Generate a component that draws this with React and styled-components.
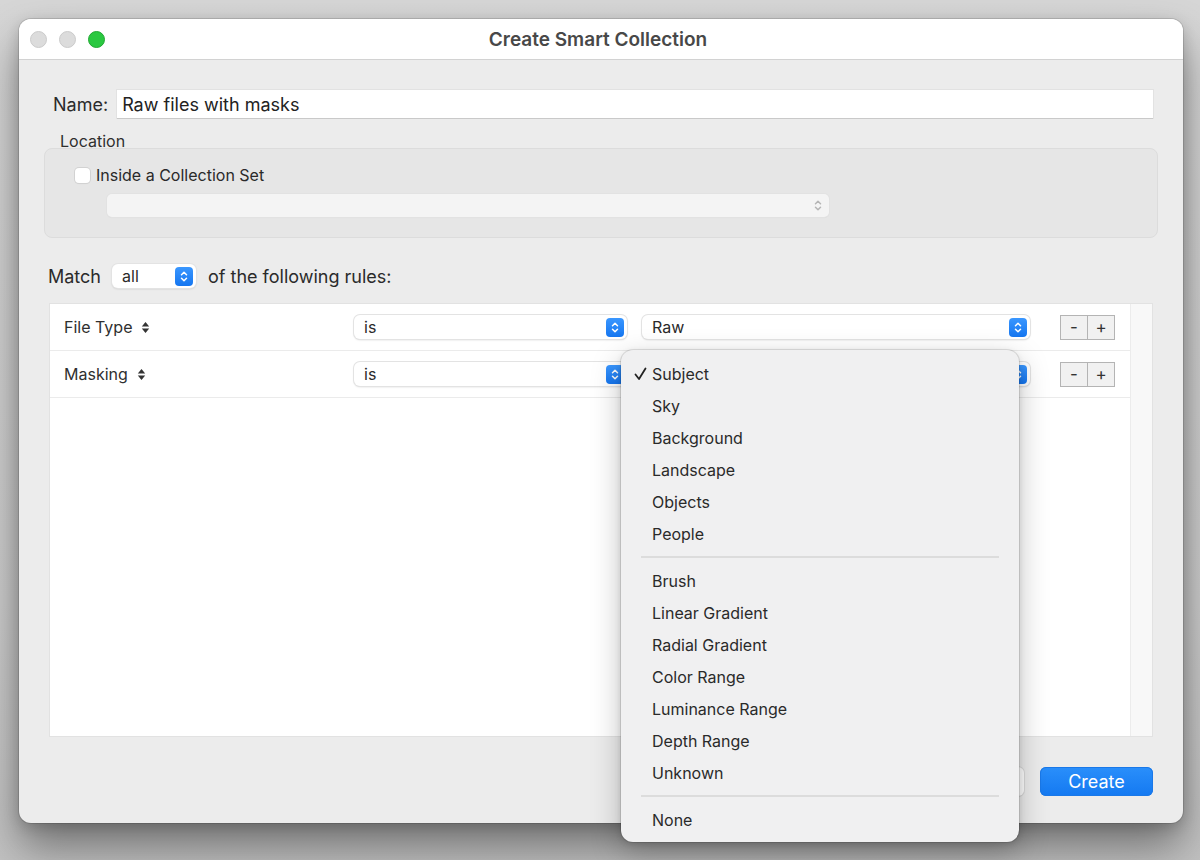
import React from "react";
import styled, { createGlobalStyle } from "styled-components";

const Global = createGlobalStyle`
  html, body {
    margin: 0;
    padding: 0;
  }
  body {
    width: 1200px;
    height: 860px;
    overflow: hidden;
    background: linear-gradient(180deg, #d6d6d6 0%, #cdcdcd 70%, #c2c2c2 100%);
    font-family: Inter, "Noto Sans", "Liberation Sans", sans-serif;
    color: #2b2b2b;
  }
`;

const Page = styled.div`
  padding: 19px 17px 0 19px;
`;

const Window = styled.div`
  position: relative;
  width: 1164px;
  height: 804px;
  border-radius: 12px;
  background: #ececec;
  box-shadow: 0 0 0 1px rgba(0, 0, 0, 0.12), 0 24px 44px rgba(0, 0, 0, 0.42),
    0 4px 14px rgba(0, 0, 0, 0.16);
  display: flex;
  flex-direction: column;
`;

const TitleBar = styled.div`
  height: 40px;
  flex: none;
  border-bottom: 1px solid #d2d2d2;
  background: #ffffff;
  border-radius: 12px 12px 0 0;
  display: flex;
  align-items: center;
  padding-left: 11px;
`;

const Lights = styled.div`
  display: flex;
  gap: 12px;
`;

const Light = styled.span`
  width: 15px;
  height: 15px;
  border-radius: 50%;
  background: ${(p) => p.$color || "#dcdcdc"};
  border: 1px solid ${(p) => (p.$color ? "#21a833" : "#cbcbcb")};
`;

const Title = styled.div`
  flex: 1;
  text-align: center;
  margin-left: -92px;
  font-size: 19px;
  font-weight: 600;
  color: #484848;
`;

const Body = styled.div`
  flex: 1;
  padding: 30px 25px 0 25px;
  display: flex;
  flex-direction: column;
`;

const NameRow = styled.div`
  display: flex;
  align-items: center;
  padding: 0 5px 0 9px;
  height: 28px;
`;

const Label = styled.span`
  font-size: 18px;
  color: #2a2a2a;
  white-space: nowrap;
  margin-left: ${(p) => p.$ml || 0}px;
`;

const TextInput = styled.div`
  flex: 1;
  height: 28px;
  margin-left: 9px;
  background: #fff;
  box-shadow: 0 1px 0 #c9c9c9, 0 0 0 1px #e2e2e2;
  display: flex;
  align-items: center;
  padding-left: 5px;
  font-size: 18px;
  color: #222;
`;

const LocationLabel = styled.div`
  font-size: 16px;
  color: #2f2f2f;
  padding-left: 16px;
  height: 17px;
  margin-top: 13px;
  line-height: 20px;
`;

const GroupBox = styled.div`
  height: 90px;
  box-sizing: border-box;
  background: #e6e6e6;
  border: 1px solid #dcdcdc;
  border-radius: 8px;
  padding: 17px 0 0 30px;
  display: flex;
  flex-direction: column;
`;

const CheckRow = styled.label`
  display: flex;
  align-items: center;
  gap: 6px;
  font-size: 16px;
  color: #2a2a2a;
  height: 18px;
`;

const Checkbox = styled.span`
  width: 15px;
  height: 15px;
  border-radius: 4px;
  background: #fff;
  box-shadow: 0 0 0 1px #d2d2d2, 0 1px 1px rgba(0, 0, 0, 0.08);
`;

const DisabledPopup = styled.div`
  margin: 10px 0 0 32px;
  width: 722px;
  height: 23px;
  background: #f4f4f4;
  border-radius: 5px;
  box-shadow: 0 0 0 1px #e2e2e2, 0 1px 1px rgba(0, 0, 0, 0.06);
  display: flex;
  align-items: center;
  justify-content: flex-end;
  padding-right: 7px;
  box-sizing: border-box;
`;

const MatchRow = styled.div`
  display: flex;
  align-items: center;
  margin-top: 26px;
  padding-left: 4px;
  height: 24px;
`;

const Popup = styled.div`
  width: ${(p) => p.$w}px;
  height: 24px;
  margin-left: ${(p) => p.$ml || 0}px;
  box-sizing: border-box;
  background: #fff;
  border-radius: 6px;
  box-shadow: 0 0 0 1px #e3e3e3, 0 1px 2px rgba(0, 0, 0, 0.18);
  display: flex;
  align-items: center;
  justify-content: space-between;
  padding: 0 3px 0 10px;
  font-size: 16px;
  color: #2a2a2a;
  flex: none;
`;

const BlueStep = styled.span`
  width: 18px;
  height: 19px;
  margin-left: auto;
  border-radius: 4px;
  background: linear-gradient(180deg, #3a97ff, #1576f0);
  display: flex;
  align-items: center;
  justify-content: center;
`;

const Table = styled.div`
  margin: 15px 5px 0 5px;
  height: 434px;
  box-sizing: border-box;
  background: #fff;
  border: 1px solid #e2e2e2;
  display: flex;
`;

const Rows = styled.div`
  flex: 1;
`;

const ScrollTrack = styled.div`
  width: 21px;
  background: #f8f8f8;
  border-left: 1px solid #ececec;
`;

const Row = styled.div`
  height: 46px;
  border-bottom: 1px solid #ebebeb;
  display: flex;
  align-items: center;
`;

const Field = styled.div`
  width: 290px;
  padding-left: 14px;
  display: flex;
  align-items: center;
  gap: 9px;
  font-size: 16px;
  color: #2f2f2f;
  flex: none;
`;

const PlusMinus = styled.div`
  display: flex;
  margin-left: 30px;
`;

const PMButton = styled.span`
  width: 28px;
  height: 25px;
  box-sizing: border-box;
  background: #f1f1f1;
  border: 1px solid #b4b4b4;
  margin-left: ${(p) => (p.$second ? "-1px" : "0")};
  display: flex;
  align-items: center;
  justify-content: center;
  font-size: 17px;
  color: #333;
`;

const Footer = styled.div`
  display: flex;
  justify-content: flex-end;
  gap: 16px;
  margin-top: 30px;
  padding-right: 5px;
`;

const Button = styled.span`
  width: ${(p) => p.$w}px;
  height: 29px;
  border-radius: 6px;
  display: flex;
  align-items: center;
  justify-content: center;
  font-size: 18px;
  color: ${(p) => (p.$primary ? "#fff" : "#222")};
  background: ${(p) =>
    p.$primary ? "linear-gradient(180deg, #2a8ffb, #1479f1)" : "#fff"};
  box-shadow: ${(p) =>
    p.$primary
      ? "0 0 0 1px #1a78e8 inset"
      : "0 0 0 1px #dadada, 0 1px 1px rgba(0,0,0,0.12)"};
`;

const Menu = styled.div`
  position: absolute;
  left: 602px;
  top: 331px;
  width: 398px;
  padding: 8px 0 6px;
  box-sizing: border-box;
  background: #f0f0f1;
  border-radius: 12px;
  box-shadow: 0 0 0 1px rgba(0, 0, 0, 0.1), 0 10px 30px rgba(0, 0, 0, 0.25),
    0 2px 6px rgba(0, 0, 0, 0.12);
  z-index: 5;
`;

const MenuItem = styled.div`
  height: 32px;
  display: flex;
  align-items: center;
  position: relative;
  padding-left: 31px;
  font-size: 16px;
  color: #2a2a2a;
`;

const Check = styled.span`
  position: absolute;
  left: 13px;
  top: 9px;
  display: flex;
`;

const Separator = styled.div`
  height: 2px;
  background: #dcdcdc;
  margin: 6px 20px 7px 20px;
`;

const Chevrons = ({ color = "#fff", w = 8 }) => (
  <svg width={w} height="13" viewBox="0 0 8 13">
    <path
      d="M1.5 4.8 L4 2.3 L6.5 4.8 M1.5 8.2 L4 10.7 L6.5 8.2"
      fill="none"
      stroke={color}
      strokeWidth="1.5"
      strokeLinecap="round"
      strokeLinejoin="round"
    />
  </svg>
);

const Sorter = () => (
  <svg width="9" height="13" viewBox="0 0 9 13">
    <path d="M4.5 1 L8.2 5.4 H0.8 Z M4.5 12 L8.2 7.6 H0.8 Z" fill="#333" />
  </svg>
);

const CheckMark = () => (
  <svg width="13" height="14" viewBox="0 0 13 14">
    <path
      d="M1.5 7.5 L5 12 L11.5 1.5"
      fill="none"
      stroke="#222"
      strokeWidth="1.8"
      strokeLinecap="round"
      strokeLinejoin="round"
    />
  </svg>
);

const Stepper = () => (
  <BlueStep>
    <Chevrons />
  </BlueStep>
);

const groups = [
  ["Subject", "Sky", "Background", "Landscape", "Objects", "People"],
  [
    "Brush",
    "Linear Gradient",
    "Radial Gradient",
    "Color Range",
    "Luminance Range",
    "Depth Range",
    "Unknown",
  ],
  ["None"],
];

const rules = [
  { field: "File Type", op: "is", value: "Raw" },
  { field: "Masking", op: "is", value: "" },
];

export default function App() {
  return (
    <Page>
      <Global />
      <Window>
        <TitleBar>
          <Lights>
            <Light />
            <Light />
            <Light $color="#2ac840" />
          </Lights>
          <Title>Create Smart Collection</Title>
        </TitleBar>
        <Body>
          <NameRow>
            <Label>Name:</Label>
            <TextInput>Raw files with masks</TextInput>
          </NameRow>
          <LocationLabel>Location</LocationLabel>
          <GroupBox>
            <CheckRow>
              <Checkbox />
              Inside a Collection Set
            </CheckRow>
            <DisabledPopup>
              <Chevrons color="#b5b5b5" />
            </DisabledPopup>
          </GroupBox>
          <MatchRow>
            <Label>Match</Label>
            <Popup $w={84} $ml={11}>
              all
              <Stepper />
            </Popup>
            <Label $ml={12}>of the following rules:</Label>
          </MatchRow>
          <Table>
            <Rows>
              {rules.map((r) => (
                <Row key={r.field}>
                  <Field>
                    {r.field}
                    <Sorter />
                  </Field>
                  <Popup $w={273}>
                    {r.op}
                    <Stepper />
                  </Popup>
                  <Popup $w={388} $ml={15}>
                    {r.value}
                    <Stepper />
                  </Popup>
                  <PlusMinus>
                    <PMButton>-</PMButton>
                    <PMButton $second>+</PMButton>
                  </PlusMinus>
                </Row>
              ))}
            </Rows>
            <ScrollTrack />
          </Table>
          <Footer>
            <Button $w={94}>Cancel</Button>
            <Button $w={113} $primary>
              Create
            </Button>
          </Footer>
        </Body>
        <Menu>
          {groups.map((g, gi) => (
            <React.Fragment key={gi}>
              {gi > 0 && <Separator />}
              {g.map((item) => (
                <MenuItem key={item}>
                  {item === "Subject" && (
                    <Check>
                      <CheckMark />
                    </Check>
                  )}
                  {item}
                </MenuItem>
              ))}
            </React.Fragment>
          ))}
        </Menu>
      </Window>
    </Page>
  );
}
